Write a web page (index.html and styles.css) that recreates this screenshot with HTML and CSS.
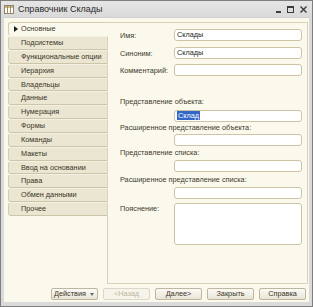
FILE: index.html
```html
<!DOCTYPE html>
<html lang="ru">
<head>
<meta charset="utf-8">
<title>Справочник Склады</title>
<link rel="stylesheet" href="styles.css">
</head>
<body>
<div class="window">
  <div class="titlebar">
    <svg class="ticon" width="10" height="9" viewBox="0 0 10 9">
      <rect x="0.5" y="0.5" width="9" height="8" fill="#fff" stroke="#8d8571"/>
      <rect x="1" y="1" width="8" height="2" fill="#c9b88f"/>
      <line x1="3.5" y1="1" x2="3.5" y2="8.5" stroke="#b08a4a"/>
      <line x1="6.5" y1="1" x2="6.5" y2="8.5" stroke="#b08a4a"/>
    </svg>
    <span class="title">Справочник Склады</span>
    <div class="wctl">
      <span class="wmin"></span>
      <span class="wmax"></span>
      <svg class="wclose" width="7" height="7" viewBox="0 0 7 7"><path d="M0.5 0.5 L6.5 6.5 M6.5 0.5 L0.5 6.5" stroke="#3c3c3c" stroke-width="1.4"/></svg>
    </div>
  </div>
  <div class="client">
    <div class="main">
      <div class="tabs">
        <div class="tab active"><span class="arrow"></span>Основные</div>
        <div class="tab">Подсистемы</div>
        <div class="tab">Функциональные опции</div>
        <div class="tab">Иерархия</div>
        <div class="tab">Владельцы</div>
        <div class="tab">Данные</div>
        <div class="tab">Нумерация</div>
        <div class="tab">Формы</div>
        <div class="tab">Команды</div>
        <div class="tab">Макеты</div>
        <div class="tab">Ввод на основании</div>
        <div class="tab">Права</div>
        <div class="tab">Обмен данными</div>
        <div class="tab">Прочее</div>
        <div class="tabs-fill"></div>
      </div>
      <div class="panel">
        <div class="row r1"><span class="lbl">Имя:</span><div class="input">Склады</div></div>
        <div class="row r2"><span class="lbl">Синоним:</span><div class="input">Склады</div></div>
        <div class="row r3"><span class="lbl">Комментарий:</span><div class="input"></div></div>
        <div class="wlbl w1">Представление объекта:</div>
        <div class="input winput i1"><span class="sel">Склад</span></div>
        <div class="wlbl w2">Расширенное представление объекта:</div>
        <div class="input winput i2"></div>
        <div class="wlbl w3">Представление списка:</div>
        <div class="input winput i3"></div>
        <div class="wlbl w4">Расширенное представление списка:</div>
        <div class="input winput i4"></div>
        <div class="row-area"><span class="lbl">Пояснение:</span><div class="input area"></div></div>
      </div>
    </div>
    <div class="footer">
      <div class="btn btn-menu"><span>Действия</span><span class="dd"></span></div>
      <div class="btn disabled">&lt;Назад</div>
      <div class="btn">Далее&gt;</div>
      <div class="btn">Закрыть</div>
      <div class="btn">Справка</div>
    </div>
  </div>
</div>
</body>
</html>
```
FILE: styles.css
```css
html, body {
  margin: 0;
  padding: 0;
  background: #ffffff;
}
body {
  font-family: "Liberation Sans", Arial, sans-serif;
  font-size: 7.3px;
  color: #403a2c;
}
.window {
  width: 313px;
  height: 307px;
  box-sizing: border-box;
  border: 1px solid #7e7e7e;
  background: #dadada;
  padding: 0 3px 4px 3px;
  display: flex;
  flex-direction: column;
}
.titlebar {
  height: 16px;
  flex: none;
  display: flex;
  align-items: center;
  background: linear-gradient(#e6e6e6, #d9d9d9);
  margin: 0 -3px;
  padding: 0 5px 0 3px;
}
.ticon {
  flex: none;
  margin-top: 1px;
}
.title {
  margin-left: 4px;
  font-size: 9px;
  color: #2a2a2a;
  flex: 1;
}
.wctl {
  display: flex;
  align-items: center;
  gap: 6px;
}
.wmin {
  width: 5px;
  height: 2px;
  background: #3c3c3c;
  margin-top: 6px;
}
.wmax {
  width: 7px;
  height: 7px;
  box-sizing: border-box;
  border: 1px solid #3c3c3c;
  border-top-width: 2px;
}
.wclose {
  display: block;
}
.client {
  flex: 1;
  background: #fbf9ec;
  display: flex;
  flex-direction: column;
  padding: 4px 1px 0 4px;
  border-top: 1px solid #cfcfcf;
}
.main {
  height: 262px;
  flex: none;
  display: flex;
}
.tabs {
  width: 100px;
  flex: none;
  display: flex;
  flex-direction: column;
}
.tab {
  height: 13.85px;
  box-sizing: border-box;
  flex: none;
  background: #ebe6d1;
  border-left: 1px solid #d3ccb2;
  border-top: 1px solid #f4f1e4;
  border-bottom: 1px solid #cdc5a8;
  border-right: 1px solid #d8d2ba;
  border-radius: 3px 0 0 3px;
  padding-left: 12px;
  line-height: 11px;
  color: #3a3528;
  white-space: nowrap;
  position: relative;
}
.tab.active {
  height: 14px;
  background: #fbf9ec;
  border-top: 1px solid #d3ccb2;
  border-bottom: none;
  border-right: none;
  padding-left: 12px;
  line-height: 12px;
}
.arrow {
  position: absolute;
  left: 5px;
  top: 3px;
  width: 0;
  height: 0;
  border-left: 4px solid #1e1e1e;
  border-top: 3px solid transparent;
  border-bottom: 3px solid transparent;
}
.tabs-fill {
  flex: 1;
  border-right: 1px solid #d8d2ba;
}
.panel {
  flex: 1;
  border: 1px solid #d8d2ba;
  border-left: none;
  padding: 6px 5px 0 12px;
}
.row {
  display: flex;
  align-items: center;
}
.r2 { margin-top: 6px; }
.r3 { margin-top: 5px; }
.lbl {
  width: 54px;
  flex: none;
  white-space: nowrap;
}
.input {
  flex: 1;
  height: 12px;
  box-sizing: border-box;
  border: 1px solid #cdc4a4;
  border-radius: 3px;
  background: #ffffff;
  line-height: 10px;
  padding-left: 2px;
  color: #1f1f1f;
  white-space: nowrap;
  overflow: hidden;
}
.wlbl {
  line-height: 10px;
  white-space: nowrap;
}
.winput {
  margin-left: 54px;
}
.w1 { margin-top: 21px; }
.i1 { margin-top: 3px; }
.w2 { margin-top: 1px; }
.i2 { margin-top: 1px; }
.w3 { margin-top: 2px; }
.i3 { margin-top: 2px; }
.w4 { margin-top: 3px; }
.i4 { margin-top: 2px; }
.sel {
  background: #3266c8;
  color: #ffffff;
  padding: 0 1px;
}
.row-area {
  display: flex;
  align-items: flex-start;
  margin-top: 4px;
}
.row-area .lbl {
  margin-top: 1px;
  line-height: 10px;
}
.area {
  height: 42px;
}
.footer {
  flex: 1;
  display: flex;
  justify-content: flex-end;
  align-items: flex-start;
  gap: 5px;
  padding: 4px 2px 0 0;
}
.btn {
  width: 47px;
  height: 12px;
  box-sizing: border-box;
  border: 1px solid #bdb6a0;
  border-radius: 2px;
  background: linear-gradient(#fbfaf4, #e8e4d6);
  text-align: center;
  line-height: 10px;
  color: #3a3528;
}
.btn.disabled {
  color: #bdb59c;
  border-color: #dcd7c6;
  background: #f6f4ea;
}
.btn-menu {
  display: flex;
  align-items: center;
  justify-content: space-between;
  padding: 0 3px 0 2px;
}
.dd {
  width: 0;
  height: 0;
  border-top: 3px solid #6b6b6b;
  border-left: 2.5px solid transparent;
  border-right: 2.5px solid transparent;
}
```
